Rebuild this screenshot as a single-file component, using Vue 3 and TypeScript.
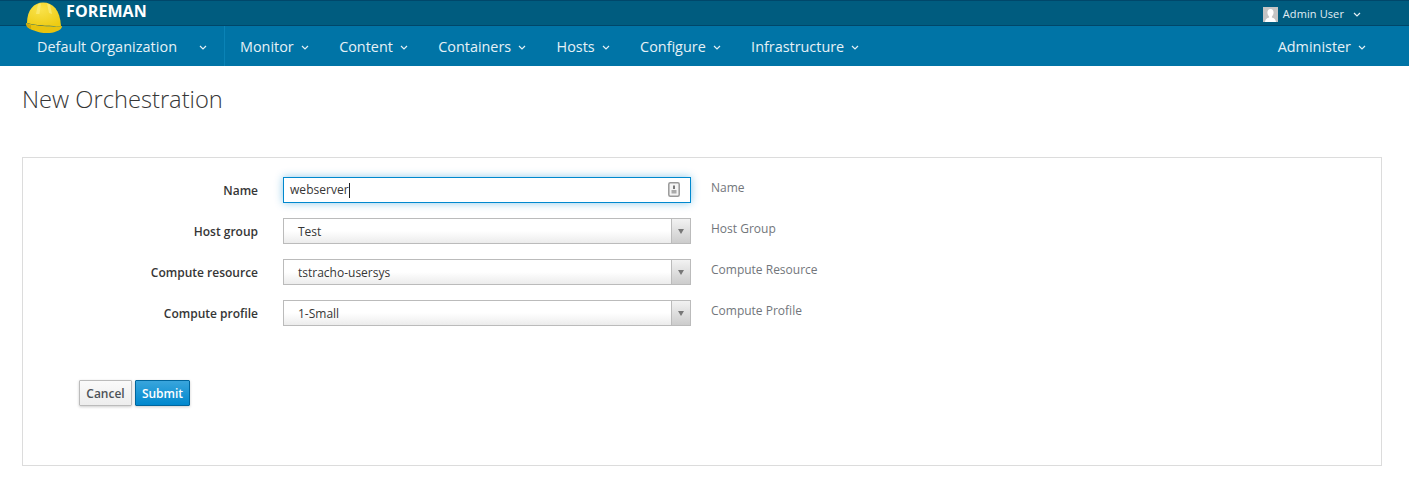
<template>
  <div class="page">
    <header class="topbar">
      <div class="brand">
        <svg class="helmet" width="38" height="34" viewBox="0 0 38 34">
          <defs>
            <radialGradient id="dome" cx="0.4" cy="0.3" r="0.8">
              <stop offset="0" stop-color="#f9e24a" />
              <stop offset="1" stop-color="#eecb12" />
            </radialGradient>
          </defs>
          <path d="M2 22 C2 9 9 1.500 18 1.500 C28 1.500 35 9 36 25 C28 25 12 25 2 22 Z" fill="url(#dome)" />
          <path d="M13 3 L11 13 L14.500 13 L16 2.500 Z M22 2.500 L24 12 L27 13 L25 3.500 Z" fill="#fbec7c" opacity="0.7" />
          <path d="M1 22 C10 25 28 26 37 25 C37 27.500 35 29.500 31 30.500 C26 33 15 32.500 9 29.500 C5 28.500 1 26.500 1 22 Z" fill="#e8c30e" />
          <path d="M1.500 22.500 L6 24 L6 28 L2 26 Z" fill="#cfa90a" />
        </svg>
        <span class="brand-name">FOREMAN</span>
      </div>
      <div class="user">
        <svg class="avatar" width="15" height="15" viewBox="0 0 15 15">
          <rect width="15" height="15" fill="#c4c4c4" />
          <path d="M7.500 2 C9.600 2 10.600 3.600 10.600 5.600 C10.600 7.400 9.600 9 8.900 9.500 L8.900 10.400 C10.600 11 12.500 11.600 13 15 L2 15 C2.500 11.600 4.400 11 6.100 10.400 L6.100 9.500 C5.400 9 4.400 7.400 4.400 5.600 C4.400 3.600 5.400 2 7.500 2 Z" fill="#fff" />
        </svg>
        <span class="user-name">Admin User</span>
        <svg class="caret small" viewBox="0 0 8 5"><path d="M1 1 L4 4 L7 1" /></svg>
      </div>
    </header>

    <nav class="navbar">
      <div class="org">
        <span>Default Organization</span>
        <svg class="caret" viewBox="0 0 8 5"><path d="M1 1 L4 4 L7 1" /></svg>
      </div>
      <div class="menus">
        <div v-for="item in menus" :key="item" class="menu">
          <span>{{ item }}</span>
          <svg class="caret" viewBox="0 0 8 5"><path d="M1 1 L4 4 L7 1" /></svg>
        </div>
      </div>
      <div class="menu admin">
        <span>Administer</span>
        <svg class="caret" viewBox="0 0 8 5"><path d="M1 1 L4 4 L7 1" /></svg>
      </div>
    </nav>

    <h1 class="title">New Orchestration</h1>

    <form class="panel" @submit.prevent>
      <div class="row">
        <label class="label">Name</label>
        <div class="name-input">
          <span class="value">webserver</span><span class="cursor"></span>
          <svg class="key" width="12" height="15" viewBox="0 0 12 15">
            <rect x="0.800" y="0.800" width="10.400" height="13.400" rx="1.500" fill="#f4f4f4" stroke="#999" stroke-width="1.500" />
            <rect x="5" y="3.500" width="2" height="3.500" fill="#777" />
            <rect x="3.500" y="8" width="5" height="3.500" fill="#aaa" />
          </svg>
        </div>
        <span class="help">Name</span>
      </div>

      <div v-for="f in selects" :key="f.label" class="row">
        <label class="label">{{ f.label }}</label>
        <div class="select">
          <span class="select-value">{{ f.value }}</span>
          <span class="select-arrow"><i></i></span>
        </div>
        <span class="help">{{ f.help }}</span>
      </div>

      <div class="actions">
        <button type="button" class="btn cancel">Cancel</button>
        <button type="submit" class="btn submit">Submit</button>
      </div>
    </form>
  </div>
</template>

<script setup lang="ts">
type SelectField = {
  label: string
  value: string
  help: string
}

const menus: string[] = ['Monitor', 'Content', 'Containers', 'Hosts', 'Configure', 'Infrastructure']

const selects: SelectField[] = [
  { label: 'Host group', value: 'Test', help: 'Host Group' },
  { label: 'Compute resource', value: 'tstracho-usersys', help: 'Compute Resource' },
  { label: 'Compute profile', value: '1-Small', help: 'Compute Profile' }
]
</script>

<style>
html, body { margin: 0; background: #fff; }
</style>

<style scoped>
.page {
  font-family: 'Open Sans', 'Noto Sans', sans-serif;
  font-size: 12px;
  color: #363636;
  height: 499px;
  overflow: hidden;
}

.topbar {
  height: 26px;
  box-sizing: border-box;
  background: #005c7f;
  border-top: 1px solid #00476a;
  border-bottom: 1px solid #00476a;
  display: flex;
  justify-content: space-between;
  align-items: flex-start;
}
.brand { display: flex; align-items: flex-start; margin-left: 25px; height: 24px; }
.helmet { flex: none; margin-right: 3px; position: relative; z-index: 1; }
.brand-name {
  color: #fff;
  font-weight: 700;
  font-size: 16px;
  line-height: 20px;
  letter-spacing: 0.1px;
}

.user {
  display: flex;
  align-items: center;
  height: 27px;
  margin-right: 48px;
  color: #e0eef4;
  font-size: 11px;
}
.avatar { margin-right: 5px; }
.user-name { margin: 0 9px 2px 0; letter-spacing: 0.1px; }

.caret {
  width: 8px;
  height: 5px;
  flex: none;
  fill: none;
  stroke: #e4f0f5;
  stroke-width: 1.2;
}

.navbar {
  height: 40px;
  background: #0074a6;
  display: flex;
  align-items: center;
  color: #e6f1f6;
  font-size: 14.4px;
}
.org {
  display: flex;
  align-items: center;
  height: 100%;
  width: 225px;
  box-sizing: border-box;
  padding-left: 37px;
  border-right: 1px solid #0a83b6;
}
.org span { letter-spacing: 0.05px; }
.org .caret { margin-left: 22px; margin-top: 2px; }
.menus {
  display: flex;
  gap: 30.4px;
  height: 100%;
  margin-left: 15px;
}
.menu {
  display: flex;
  align-items: center;
  height: 100%;
}
.menu .caret { margin-left: 7px; margin-top: 2px; }
.menu.admin { margin-left: auto; margin-right: 43px; }

.title {
  margin: 19px 0 0 22px;
  font-size: 23.7px;
  font-weight: 300;
  line-height: 28px;
  color: #363636;
}

.panel {
  margin: 44px 27px 0 22px;
  height: 309px;
  box-sizing: border-box;
  border: 1px solid #dcdcdc;
  padding-top: 19px;
}

.row {
  display: flex;
  align-items: flex-start;
  height: 26px;
  margin-bottom: 15px;
}
.label {
  width: 235px;
  text-align: right;
  font-weight: 600;
  line-height: 28px;
  flex: none;
}
.help {
  margin-left: 20px;
  line-height: 22px;
  color: #72767b;
}

.name-input {
  position: relative;
  margin-left: 25px;
  width: 408px;
  height: 26px;
  box-sizing: border-box;
  border: 1px solid #0088ce;
  box-shadow: 0 0 8px rgba(0, 136, 206, 0.45);
  display: flex;
  align-items: center;
  padding-left: 6px;
  background: #fff;
}
.value { line-height: 24px; letter-spacing: 0.05px; }
.cursor {
  display: inline-block;
  width: 1px;
  height: 15px;
  background: #222;
}
.key { position: absolute; right: 10px; top: 4px; }

.select {
  margin-left: 25px;
  width: 408px;
  height: 26px;
  box-sizing: border-box;
  border: 1px solid #bbb;
  background: linear-gradient(to bottom, #fff 50%, #ececec);
  display: flex;
  align-items: center;
  justify-content: space-between;
}
.select-value { margin-left: 14px; }
.select-arrow {
  width: 18px;
  height: 100%;
  border-left: 1px solid #bbb;
  background: linear-gradient(to bottom, #f2f2f2, #ccc);
  display: flex;
  align-items: center;
  justify-content: center;
}
.select-arrow i {
  width: 0;
  height: 0;
  border-left: 3px solid transparent;
  border-right: 3px solid transparent;
  border-top: 5px solid #777;
}

.actions {
  display: flex;
  gap: 3px;
  margin: 54px 0 0 56px;
}
.btn {
  font-family: inherit;
  font-size: 12px;
  font-weight: 600;
  height: 26px;
  padding: 0;
  box-sizing: border-box;
  border-radius: 1px;
  box-shadow: 0 1px 3px rgba(0, 0, 0, 0.2);
}
.cancel {
  width: 53px;
  border: 1px solid #bbb;
  background: linear-gradient(to bottom, #fafafa, #ededed);
  color: #4d5258;
}
.submit {
  width: 55px;
  border: 1px solid #00659c;
  background: linear-gradient(to bottom, #39a5dc, #0088ce);
  color: #fff;
}
</style>
